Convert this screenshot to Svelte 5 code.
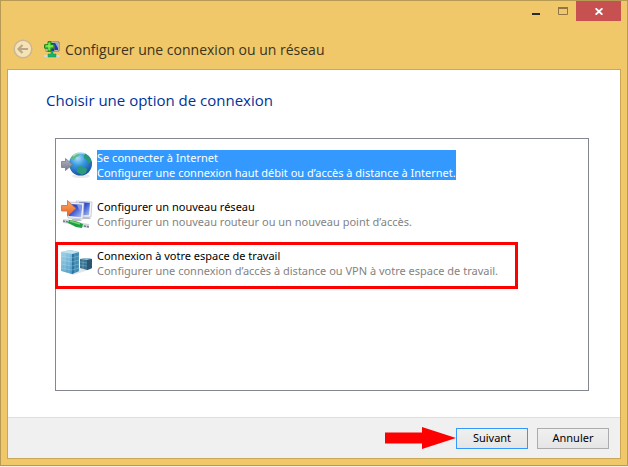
<script>
  const options = [
    { id: 'internet', title: 'Se connecter à Internet', detail: 'Configurer une connexion haut débit ou d’accès à distance à Internet.' },
    { id: 'network', title: 'Configurer un nouveau réseau', detail: 'Configurer un nouveau routeur ou un nouveau point d’accès.' },
    { id: 'workplace', title: 'Connexion à votre espace de travail', detail: 'Configurer une connexion d’accès à distance ou VPN à votre espace de travail.', marked: true }
  ];
  let selected = $state('internet');
</script>

<main class="window">
  <header>
    <div class="controls">
      <button class="minimize" aria-label="Réduire">
        <svg width="8" height="2"><rect width="8" height="2" fill="#2b2b2b" /></svg>
      </button>
      <button class="maximize" aria-label="Agrandir" disabled>
        <svg width="10" height="8"><path d="M0.5 0V7.5H9.5V0M0 1H10" fill="none" stroke="#907646" /><path d="M0 0h10v2H0z" fill="#907646" /></svg>
      </button>
      <button class="close" aria-label="Fermer">
        <svg width="8" height="7" viewBox="0 0 8 7"><path d="M0.6 0.3L7.4 6.7M7.4 0.3L0.6 6.7" stroke="#fff" stroke-width="1.9" /></svg>
      </button>
    </div>
    <div class="caption">
      <button class="back" aria-label="Précédent" disabled>
        <svg width="20" height="20" viewBox="0 0 20 20">
          <circle cx="10" cy="10" r="8.8" fill="#f7e2b5" stroke="#c9b795" stroke-width="1.5" />
          <path d="M15 10H6M9.5 6L5.5 10l4 4" fill="none" stroke="#b9a888" stroke-width="2.2" />
        </svg>
      </button>
      <svg width="16" height="17" viewBox="0 0 16 17">
        <path d="M5.5 1h9.5v9H5.5z" fill="#f4f1e4" stroke="#777363" />
        <path d="M6 2h8v7H6z" fill="#2636b8" />
        <path d="M11 2h3v5z" fill="#8fa6ee" />
        <path d="M2 4.5h8v6H2z" fill="#e9ead9" stroke="#8b8770" />
        <path d="M8 7h2v3H6z" fill="#2638ad" />
        <path d="M0 14h16v2H0z" fill="#c8dce4" />
        <path d="M7 11h2v2h3v3H4v-3h3z" fill="#19b366" stroke="#11945a" stroke-width=".5" />
        <path d="M4 .7h3v3h3v3.5H7v3H4v-3H.6V3.7H4z" fill="#54d331" stroke="#16811c" />
        <path d="M5 2v7M2 5h7" stroke="#9af463" />
      </svg>
      <span>Configurer une connexion ou un réseau</span>
    </div>
  </header>

  <section class="page">
    <div class="content">
      <h1 id="heading">Choisir une option de connexion</h1>
      <div class="list" role="listbox" aria-labelledby="heading">
        {#each options as option}
          <button class="option" class:marked={option.marked} role="option" aria-selected={selected === option.id} onclick={() => (selected = option.id)}>
            {#if option.id === 'internet'}
              <svg width="32" height="32" viewBox="0 0 32 32">
                <defs>
                  <radialGradient id="sea" cx=".38" cy=".25" r=".8">
                    <stop offset="0" stop-color="#a5dcfb" />
                    <stop offset=".4" stop-color="#3a9be2" />
                    <stop offset="1" stop-color="#124c9d" />
                  </radialGradient>
                  <linearGradient id="steel" x2="0" y2="1"><stop stop-color="#b4b6c2" /><stop offset="1" stop-color="#747889" /></linearGradient>
                </defs>
                <ellipse cx="20" cy="26" rx="9" ry="2" fill="#e6e9ed" />
                <circle cx="19.5" cy="14" r="11.5" fill="url(#sea)" />
                <path d="M12 5q3-3 7-2l-1 3-3 1-2 3-3-1q0-2 2-4z" fill="#62b789" />
                <path d="M23 3q6 3 7 8l-2 3-2-4-3-2z" fill="#2b9970" />
                <path d="M16 17l4-1 6 3-1 4-4 2-5-3z" fill="#2d9a78" />
                <path d="M12 6q5-5 12-2" fill="none" stroke="#d8f3ff" stroke-width="1.5" opacity=".6" />
                <path d="M.5 11.5h4V8.500l7 6-7 6v-3h-4z" fill="url(#steel)" stroke="#777a89" stroke-width=".8" />
              </svg>
            {:else if option.id === 'network'}
              <svg width="32" height="32" viewBox="0 0 32 32">
                <defs>
                  <linearGradient id="screen" x2="1" y2="1"><stop stop-color="#1225a5" /><stop offset=".45" stop-color="#3857d1" /><stop offset="1" stop-color="#b9c9f5" /></linearGradient>
                  <linearGradient id="warm" x2="0" y2="1"><stop stop-color="#ffad6d" /><stop offset="1" stop-color="#e8601d" /></linearGradient>
                </defs>
                <path d="M15 2l16 1-1 15H18z" fill="#f3f5f8" stroke="#b6bbc8" stroke-width=".7" />
                <path d="M18 3l11 .8-1 12.500h-9z" fill="url(#screen)" />
                <path d="M21 18h7l2 2h-9z" fill="#b8bec9" />
                <path d="M7 3l16 1-1 16L7 19z" fill="#edf0f5" stroke="#b3b9c6" stroke-width=".7" />
                <path d="M8 5l13 .8-1 12.500L8 17z" fill="url(#screen)" />
                <path d="M16 6h5l-1 8z" fill="#8296e7" />
                <path d="M11 20h8l2 2H10z" fill="#b7bfcd" />
                <path d="M2 22l9 1 10 3 7 1" fill="none" stroke="#d0d5dc" stroke-width="4" />
                <path d="M2 22l5 1M23 27l5 1" stroke="#727c8c" stroke-width="1.5" stroke-dasharray="2 1" />
                <path d="M8 21l6 1 8 3-1 4-6-1-8-4z" fill="#1f9f3d" />
                <path d="M9 22l10 3" stroke="#76d472" stroke-width="1.5" />
                <path d="M.5 6.500h6V1.500l8.500 8-8.500 7.500v-5h-6z" fill="url(#warm)" stroke="#c96c3c" stroke-width=".8" />
              </svg>
            {:else}
              <svg width="32" height="32" viewBox="0 0 32 32">
                <defs>
                  <linearGradient id="front" x2="1" y2="1"><stop stop-color="#a5d8ed" /><stop offset="1" stop-color="#2f86b6" /></linearGradient>
                  <linearGradient id="side" x2="1"><stop stop-color="#27719c" /><stop offset="1" stop-color="#4f96ba" /></linearGradient>
                </defs>
                <path d="M2 23l10 4 19-6-9-2z" fill="#e1e5e8" />
                <path d="M0 4l9-2 9 2v19l-7 3-11-3z" fill="url(#front)" />
                <path d="M11 6l7-2v19l-7 3z" fill="url(#side)" />
                <path d="M0 4l9-2 9 2-7 2z" fill="#bfe1ef" />
                <path d="M0 8l11 2 7-2M0 12l11 2 7-2M0 16l11 2 7-2M0 20l11 2 7-2M4 5v18M8 6v19M14 5v20" fill="none" stroke="#c2e6f3" stroke-width=".6" opacity=".5" />
                <path d="M19 11l7-1 5 1v9l-5 2-7-2z" fill="#3a718f" />
                <path d="M19 11l7-1 5 1-5 1z" fill="#a0c3d3" />
                <path d="M26 12l5-1v9l-5 2z" fill="#285673" />
                <path d="M19 14l7 1M19 17l7 1M22 12v9" stroke="#75adc7" stroke-width=".6" />
              </svg>
            {/if}
            <span class="words">
              <span class="title">{option.title}</span>
              <span class="detail">{option.detail}</span>
            </span>
          </button>
        {/each}
      </div>
    </div>
    <footer>
      <svg class="arrow" width="71" height="22" viewBox="0 0 71 22"><path d="M0 5.500H37V0L71 11 37 22V16.500H0z" fill="#f00" /></svg>
      <button class="action default">Suivant</button>
      <button class="action">Annuler</button>
    </footer>
  </section>
</main>

<style>
  :global(body) { background: #f3f0e9; }
  * { box-sizing: border-box; }
  svg { display: block; flex: none; }
  button { border: 0; padding: 0; background: none; font: inherit; color: inherit; }
  .window {
    display: flex;
    flex-direction: column;
    min-height: calc(100vh - 1px);
    padding: 0 6px 6px 6px;
    border: 1px solid #b79a54;
    background: #f0c869;
    font-family: "Noto Sans", "Open Sans", sans-serif;
    font-size: 11px;
  }
  header { height: 68px; flex: none; }
  .controls { display: flex; justify-content: flex-end; height: 20px; }
  .controls button { display: flex; align-items: center; justify-content: center; width: 27px; }
  .controls .minimize { padding-top: 6px; }
  .controls .close { width: 45px; background: #c75050; }
  .caption { display: flex; align-items: center; gap: 5px; height: 56px; padding-left: 6px; font-family: "Open Sans", "Noto Sans", sans-serif; font-size: 14px; color: #3c3420; }
  .back { margin-right: 6px; }
  .page { display: flex; flex: 1; flex-direction: column; border: 1px solid #c9a757; background: #fff; }
  .content { display: flex; flex: 1; flex-direction: column; padding: 19px 31px 26px 38px; }
  h1 { margin: 0; font-family: "Open Sans", "Noto Sans", sans-serif; font-size: 15px; line-height: 22px; font-weight: 400; color: #003399; }
  .list { display: flex; flex: 1; flex-direction: column; align-items: flex-start; gap: 19px; margin: 27px 0 0 9px; padding: 11px 5px; border: 1px solid #828790; }
  .option { position: relative; display: flex; gap: 4px; height: 30px; text-align: left; line-height: 15px; white-space: nowrap; }
  .words, .title, .detail { display: block; }
  .title { color: #000; }
  .detail { color: #838383; }
  [aria-selected='true'] .words { background: #3399ff; }
  [aria-selected='true'] .title, [aria-selected='true'] .detail { color: #fff; }
  .marked::after { content: ''; position: absolute; inset: -6px -20px -11px -6px; border: 3px solid #f00; }
  footer { display: flex; align-items: center; justify-content: flex-end; height: 41px; padding-right: 11px; border-top: 1px solid #dfdfdf; background: #f0f0f0; }
  .action { width: 72px; height: 21px; border: 1px solid #acacac; background: linear-gradient(#f0f0f0, #e5e5e5); line-height: 18px; color: #000; }
  .default { margin-right: 9px; border-color: #3399ff; }
</style>
